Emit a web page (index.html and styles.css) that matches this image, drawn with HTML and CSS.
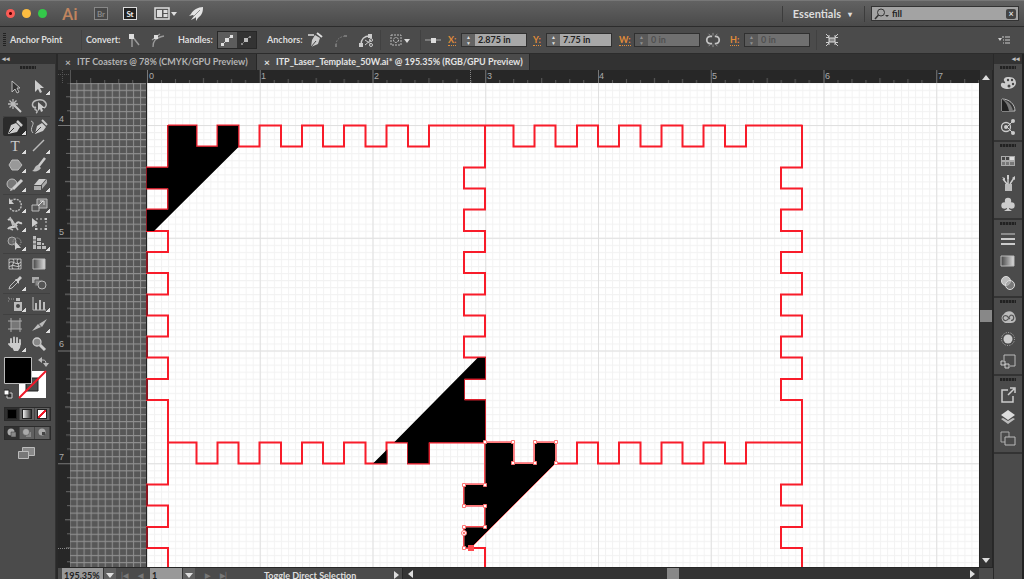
FILE: index.html
```html
<!DOCTYPE html>
<html lang="en">
<head>
<meta charset="utf-8">
<meta name="viewport" content="width=device-width, initial-scale=1">
<title>ITP_Laser_Template_50W.ai</title>
<link rel="stylesheet" href="styles.css">
</head>
<body>
<header class="titlebar">
  <div class="lights">
    <button class="light close" aria-label="Close"></button>
    <button class="light minimise" aria-label="Minimise"></button>
    <button class="light expand" aria-label="Zoom window"></button>
  </div>
  <span class="logo">Ai</span>
  <button class="badge dim">Br</button>
  <button class="badge">St</button>
  <button class="arrange" aria-label="Arrange documents"><svg width="24" height="14" viewBox="0 0 24 14"><rect x="1" y="1" width="14" height="11" fill="#555" stroke="#ddd" stroke-width="1.5"/><path d="M3 3h5v7H3zM9.500 3h4v3h-4zM9.500 7h4v3h-4z" fill="#ddd"/><path d="M17 5h6l-3 4z" fill="#ddd"/></svg></button>
  <button class="rocket" aria-label="GPU performance"><svg width="16" height="16" viewBox="0 0 16 16"><path d="M15 1C10 1 5 4 3 8L1 10l4-1 1 1-3 4 4-2 1-1 0 4 2-3c4-3 5-6 5-11z" fill="#e4e4e4"/><path d="M12 4L5 11" stroke="#777" stroke-width=".8" fill="none"/></svg></button>
  <div class="title-right">
    <button class="workspace-name">Essentials<span class="caret">▾</span></button>
    <label class="search">
      <svg width="16" height="12" viewBox="0 0 16 12"><circle cx="7" cy="4.500" r="3.500" fill="none" stroke="#333"/><path d="M4.500 7L1 11" stroke="#333" stroke-width="1.500"/><path d="M11 7h4l-2 2z" fill="#333"/></svg>
      <input type="text" value="fill" aria-label="Search help">
      <button class="clear" aria-label="Clear search">×</button>
    </label>
  </div>
</header>

<section class="controls" aria-label="Control panel">
  <div class="group selection"><span class="side-grip"></span><span>Anchor Point</span></div>
  <div class="group convert">
    <span>Convert:</span>
    <button aria-label="Convert to corner"><svg width="18" height="18" viewBox="0 0 18 18"><path d="M8 16V5l7 9" fill="none" stroke="#999" stroke-width="1.500"/><path d="M5 3h5v5H5z" fill="#ddd"/></svg></button>
    <button aria-label="Convert to smooth"><svg width="18" height="18" viewBox="0 0 18 18"><path d="M4 16c0-6 2-9 11-11M3 9l8-6" fill="none" stroke="#999" stroke-width="1.300"/><path d="M5 4h4v4H5z" fill="#ddd"/></svg></button>
    <span>Handles:</span>
    <span class="toggle"><button class="on" aria-label="Show handles"><svg width="18" height="16" viewBox="0 0 18 16"><path d="M5 12L13 4" stroke="#ccc"/><path d="M3 11h3v3H3zM12 3h3v3h-3zM7 6h4v4H7z" fill="#e0e0e0"/></svg></button><button aria-label="Hide handles"><svg width="18" height="16" viewBox="0 0 18 16"><path d="M5 12L13 4" stroke="#777"/><path d="M4 11h2v2H4zM12 4h2v2h-2z" fill="#888"/><path d="M7 6h4v4H7z" fill="#bbb"/></svg></button></span>
    <span>Anchors:</span>
    <button aria-label="Remove anchor"><svg width="18" height="18" viewBox="0 0 18 18"><path d="M2 4h6" stroke="#ddd" stroke-width="1.500"/><path d="M9 4l5 3-2 6-7 3 1-7z" fill="#ccc"/><path d="M5 16l5-6M11 2l5 4" stroke="#444"/><path d="M11 2l5 4" stroke="#ddd" stroke-width="2"/></svg></button>
    <button aria-label="Connect endpoints"><svg width="18" height="18" viewBox="0 0 18 18"><path d="M4 14c0-5 3-8 9-9" fill="none" stroke="#777" stroke-dasharray="2 1"/><path d="M3 13h2v3H3zM12 4h3v2h-3z" fill="#777"/></svg></button>
    <button aria-label="Cut path"><svg width="18" height="18" viewBox="0 0 18 18"><path d="M4 14c0-6 3-9 9-9" fill="none" stroke="#ccc" stroke-width="1.300"/><path d="M2 12h4v4H2zM11 3h4v4h-4z" fill="#ccc"/><path d="M8 9l6 4M8 14l6-5" stroke="#ccc"/><circle cx="14" cy="9" r="1.500" fill="none" stroke="#ccc"/><circle cx="14" cy="14" r="1.500" fill="none" stroke="#ccc"/></svg></button>
  </div>
  <div class="group isolate"><button aria-label="Select similar"><svg width="22" height="14" viewBox="0 0 22 14"><path d="M2 2h10v10H2z" fill="none" stroke="#bbb" stroke-dasharray="2 1"/><circle cx="7" cy="7" r="2.500" fill="none" stroke="#ccc" stroke-dasharray="2 1"/><path d="M15 6h6l-3 4z" fill="#ddd"/></svg></button></div>
  <div class="group transform">
    <svg width="18" height="14" viewBox="0 0 18 14"><path d="M1 7h16" stroke="#aaa"/><path d="M7 5h5v5H7z" fill="#ddd"/></svg>
    <label class="axis" for="fx">X:</label>
    <span class="field"><span class="spin">▲<br>▼</span><input id="fx" type="text" value="2.875 in"></span>
    <label class="axis" for="fy">Y:</label>
    <span class="field"><span class="spin">▲<br>▼</span><input id="fy" type="text" value="7.75 in"></span>
    <label class="axis" for="fw">W:</label>
    <span class="field off"><span class="spin">▲<br>▼</span><input id="fw" type="text" value="0 in" disabled></span>
    <button aria-label="Constrain proportions"><svg width="16" height="16" viewBox="0 0 18 18"><path d="M8 5H6a4 4 0 000 8h2M11 5h1a4 4 0 010 8h-1" fill="none" stroke="#c4c4c4" stroke-width="2"/><path d="M4 2l2 2M9 1v3M14 2l-2 2M4 16l2-2M9 14v3M14 16l-2-2" stroke="#999"/></svg></button>
    <label class="axis" for="fh">H:</label>
    <span class="field off"><span class="spin">▲<br>▼</span><input id="fh" type="text" value="0 in" disabled></span>
  </div>
  <div class="group shape"><button aria-label="Isolate selected object"><svg width="16" height="14" viewBox="0 0 16 14"><path d="M5 5h6v4H5z" fill="#888" stroke="#ddd"/><path d="M2 1l3 3M14 1l-3 3M2 13l3-3M14 13l-3-3M2 4.500h3V2M14 4.500h-3V2M2 9.500h3V12M14 9.500h-3V12" stroke="#ccc" fill="none"/></svg></button></div>
  <button class="panel-menu" aria-label="Panel menu"><svg width="14" height="10" viewBox="0 0 14 10"><path d="M0 3h4L2 6z" fill="#ccc"/><path d="M4 2h2M7 2h5M5 5h1M7 5h5M5 8h1M7 8h5" stroke="#ccc"/></svg></button>
</section>

<main class="workspace">
  <aside class="tools" aria-label="Tools">
    <div class="collapse">◂◂</div>
    <div class="grip"></div>
    <div class="tool-grid">
      <button aria-label="Selection"><svg viewBox="0 0 18 18"><path d="M6 3v11l3-3 2 4 2-1-2-4h3z" fill="#333" stroke="#bbb"/></svg></button>
      <button class="more" aria-label="Direct selection"><svg viewBox="0 0 18 18"><path d="M5 2v12l3-3 2 4 2-1-2-4h4z" fill="#ccc"/></svg></button>
      <button aria-label="Magic wand"><svg viewBox="0 0 18 18"><path d="M8 8l7 7" stroke="#ccc" stroke-width="2"/><path d="M7 2v10M2 7h10M3.500 3.500l7 7M10.500 3.500l-7 7" stroke="#bbb" stroke-width="1.300"/></svg></button>
      <button aria-label="Lasso"><svg viewBox="0 0 18 18"><path d="M6 11C1 10 1 4 8 3s11 5 6 8M6 10c-2 1-1 3 0 3s2 2 0 3" fill="none" stroke="#bbb" stroke-width="1.500"/><path d="M8 5v9l2-2 1 3 2-1-1-3h3z" fill="#ccc"/></svg></button>
      <hr>
      <button class="more active" aria-label="Pen"><svg viewBox="0 0 18 18"><path d="M2 16l3-9 5-2 4 4-3 5z" fill="#ccc"/><path d="M3 15l5-5" stroke="#333"/><path d="M11 3l5 5" stroke="#ccc" stroke-width="2.500"/></svg></button>
      <button aria-label="Curvature"><svg viewBox="0 0 18 18"><path d="M5 16l2-8 5-3 4 4-3 4z" fill="#ccc"/><path d="M5 15l6-6" stroke="#444"/><path d="M12 2l5 5" stroke="#ccc" stroke-width="2"/><path d="M1 3c6 2-3 7 2 12" fill="none" stroke="#bbb"/></svg></button>
      <button class="more type" aria-label="Type">T</button>
      <button class="more" aria-label="Line segment"><svg viewBox="0 0 18 18"><path d="M3 14L14 3" stroke="#bbb" stroke-width="1.500"/></svg></button>
      <button class="more" aria-label="Polygon"><svg viewBox="0 0 18 18"><path d="M6 4h6l4 5-4 5H6L3 9z" fill="#999" stroke="#bbb"/></svg></button>
      <button class="more" aria-label="Paintbrush"><svg viewBox="0 0 18 18"><path d="M15 2L8 11" stroke="#ccc" stroke-width="2.500"/><path d="M8 9l3 3c-2 3-5 4-9 3 3-1 2-5 6-6z" fill="#bbb"/></svg></button>
      <button class="more" aria-label="Shaper"><svg viewBox="0 0 18 18"><circle cx="6" cy="9" r="5" fill="#777" stroke="#bbb"/><path d="M16 5l-9 9" stroke="#ccc" stroke-width="3"/><path d="M4 16l1-3 2 2z" fill="#ccc"/></svg></button>
      <button class="more" aria-label="Eraser"><svg viewBox="0 0 18 18"><path d="M9 4h7l-5 6H4z" fill="#ccc"/><path d="M4 11h7v4H4zM12 10l5-6v4l-5 6z" fill="#aaa"/></svg></button>
      <hr>
      <button class="more" aria-label="Rotate"><svg viewBox="0 0 18 18"><path d="M5 5a6 6 0 11-1 7" fill="none" stroke="#bbb" stroke-width="1.500" stroke-dasharray="2 1"/><path d="M3 2v6h5z" fill="#ccc"/></svg></button>
      <button class="more" aria-label="Scale"><svg viewBox="0 0 18 18"><path d="M7 3h10v9H7z" fill="#777" stroke="#bbb"/><path d="M2 9h7v6H2z" fill="#555" stroke="#bbb"/><path d="M8 10l5-5m-3 0h4v4" stroke="#ddd" fill="none"/></svg></button>
      <button class="more" aria-label="Width"><svg viewBox="0 0 18 18"><path d="M2 5c5-4 5 8 8 4s3 0 6-1M2 14c3-5 6 1 9-4" fill="none" stroke="#ccc" stroke-width="2"/><path d="M4 2l3 9M7 7l5 8M3 13l4 2" stroke="#bbb" stroke-width="1.500"/></svg></button>
      <button aria-label="Free transform"><svg viewBox="0 0 18 18"><path d="M6 4h10v10H6z" fill="none" stroke="#ccc" stroke-dasharray="2 2"/><path d="M2 3v9l6-4z" fill="#ccc"/><path d="M15 3h2v2h-2zM15 13h2v2h-2zM5 13h2v2H5z" fill="#ccc"/></svg></button>
      <button class="more" aria-label="Shape builder"><svg viewBox="0 0 18 18"><circle cx="6" cy="7" r="4" fill="#666" stroke="#aaa"/><circle cx="11" cy="8" r="4" fill="none" stroke="#aaa" stroke-dasharray="1 1"/><path d="M9 7v9l2-2h4z" fill="#ccc"/></svg></button>
      <button class="more" aria-label="Perspective grid"><svg viewBox="0 0 18 18"><path d="M3 2h3v13H3zM7 4h4v3H7zM7 8h4v3H7zM7 12h4v3H7zM12 9h2v2h-2zM12 12h4v3h-4z" fill="#bbb"/><path d="M3 6h3M3 10h3" stroke="#4b4b4b"/></svg></button>
      <hr>
      <button aria-label="Mesh"><svg viewBox="0 0 18 18"><path d="M3 4h12v10H3z" fill="#444" stroke="#bbb"/><path d="M3 8c4-4 7 4 12-1M3 12c5-4 8 2 12-2M7 4c3 4-3 6 0 10M12 4c-3 4 3 6 0 10" fill="none" stroke="#ccc"/></svg></button>
      <button aria-label="Gradient"><svg viewBox="0 0 18 18"><defs><linearGradient id="gr"><stop stop-color="#444"/><stop offset="1" stop-color="#ddd"/></linearGradient></defs><path d="M3 4h12v10H3z" fill="url(#gr)" stroke="#bbb"/></svg></button>
      <button class="more" aria-label="Eyedropper"><svg viewBox="0 0 18 18"><path d="M3 15l1-3 6-6 2 2-6 6z" fill="none" stroke="#bbb"/><path d="M9 5l2 0 3-3 2 2-3 3v3z" fill="#ccc"/></svg></button>
      <button aria-label="Blend"><svg viewBox="0 0 18 18"><path d="M2 3h7v6H2z" fill="#aaa"/><path d="M5 6h7v6H5z" fill="#888" stroke="#555"/><circle cx="12" cy="11" r="4" fill="#555" stroke="#bbb"/></svg></button>
      <hr>
      <button class="more" aria-label="Symbol sprayer"><svg viewBox="0 0 18 18"><path d="M8 7h8v9H8zM10 3h4v3h-4z" fill="#bbb"/><circle cx="12" cy="11" r="2" fill="#444"/><path d="M3 4h5M2 3h1M2 6h1" stroke="#999" stroke-dasharray="1 1"/></svg></button>
      <button class="more" aria-label="Column graph"><svg viewBox="0 0 18 18"><path d="M3 2v13h13" fill="none" stroke="#bbb"/><path d="M5 8h2v7H5zM9 5h2v10H9zM13 7h2v8h-2z" fill="#bbb"/></svg></button>
      <hr>
      <button aria-label="Artboard"><svg viewBox="0 0 18 18"><path d="M5 5h9v8H5z" fill="#777"/><path d="M2 5h14M2 13h14M5 2v14M14 2v14" stroke="#aaa"/></svg></button>
      <button class="more" aria-label="Slice"><svg viewBox="0 0 18 18"><path d="M2 15l6-7 3 3zM9 8l8-5-5 8z" fill="#bbb"/></svg></button>
      <button class="more" aria-label="Hand"><svg viewBox="0 0 18 18"><path d="M5 9V4M8 8V2.500M11 8V3M14 9V5M3 9l3 3" stroke="#ccc" stroke-width="1.800" stroke-linecap="round"/><path d="M4 8h11l-1 5-2 3H8z" fill="#ccc"/></svg></button>
      <button aria-label="Zoom"><svg viewBox="0 0 18 18"><circle cx="7" cy="7" r="4" fill="#888" stroke="#ccc" stroke-width="1.300"/><path d="M10 10l5 5" stroke="#ccc" stroke-width="3"/></svg></button>
    </div>
    <svg class="swatches" width="46" height="48" viewBox="0 0 46 48"><path d="M15 15h27v27H15z" fill="#fff"/><path d="M22 22h12v13H22z" fill="#4b4b4b" stroke="#222"/><path d="M15 42L42 15" stroke="#f01828" stroke-width="2"/><path d="M.500 1.500h27v26H.500z" fill="#000" stroke="#bbb"/><path d="M36 4h3c2 0 3 1 3 4" fill="none" stroke="#bbb"/><path d="M34 4l4-3v6zM39 7h6l-3 4z" fill="#bbb"/><path d="M3 37h5v5H3z" fill="#333" stroke="#ccc"/><path d="M0 34h5v5H0z" fill="#fff" stroke="#222"/></svg>
    <div class="paint-row">
      <button class="pressed" aria-label="Colour"><i class="chip solid"></i></button>
      <button aria-label="Gradient fill"><i class="chip fade"></i></button>
      <button aria-label="None"><i class="chip none"></i></button>
    </div>
    <div class="paint-row">
      <button class="pressed" aria-label="Draw normal"><svg width="12" height="12" viewBox="0 0 12 12"><circle cx="5" cy="5" r="3.500" fill="#aaa"/><path d="M5 5h5v5H5z" fill="#888" stroke="#333" stroke-width=".500"/></svg></button>
      <button aria-label="Draw behind"><svg width="12" height="12" viewBox="0 0 12 12"><path d="M5 5h5v5H5z" fill="#888"/><circle cx="5" cy="5" r="3.500" fill="#aaa" stroke="#444" stroke-width=".500"/></svg></button>
      <button aria-label="Draw inside"><svg width="12" height="12" viewBox="0 0 12 12"><circle cx="6" cy="5" r="3.500" fill="#aaa"/><path d="M6 5h3v3H6z" fill="#444"/></svg></button>
    </div>
    <button class="screen-mode" aria-label="Change screen mode"><svg width="18" height="14" viewBox="0 0 18 14"><path d="M5.500 1.500h12v8h-12z" fill="#888" stroke="#bbb"/><path d="M1.500 5.500h10v7h-10z" fill="#777" stroke="#bbb"/></svg></button>
  </aside>

  <section class="document">
    <nav class="tabs">
      <button class="tab"><span>×</span>ITF Coasters @ 78% (CMYK/GPU Preview)</button>
      <button class="tab current"><span>×</span>ITP_Laser_Template_50W.ai* @ 195.35% (RGB/GPU Preview)</button>
    </nav>
    <svg class="ruler top"><defs>
      <pattern id="tx" x="147" y="70" width="112.750" height="14" patternUnits="userSpaceOnUse"><path d="M.500 0v14" stroke="#777"/><path d="M14.500 10v4M28.500 9v5M42.500 10v4M56.500 8v6M70.500 10v4M84.500 9v5M98.500 10v4" stroke="#5c5c5c"/></pattern></defs>
      <g transform="translate(-58 -70)"><rect x="71" y="70" width="3000" height="14" fill="url(#tx)"/><path d="M62.500 70v13M58 74.500h12" stroke="#555" stroke-dasharray="1 1"/><path d="M70.500 70v13" stroke="#555"/><path d="M470.500 70v13" stroke="#888" stroke-dasharray="1 1"/>
      <text x="149" y="79">0</text><text x="261" y="79">1</text><text x="374" y="79">2</text><text x="487" y="79">3</text><text x="599" y="79">4</text><text x="712" y="79">5</text><text x="825" y="79">6</text><text x="938" y="79">7</text></g></svg>
    <svg class="ruler left"><defs>
      <pattern id="ty" x="58" y="125" width="12" height="112.750" patternUnits="userSpaceOnUse"><path d="M0 .500h12" stroke="#777"/><path d="M9 14.500h3M8 28.500h4M9 42.500h3M7 56.500h5M9 70.500h3M8 84.500h4M9 98.500h3" stroke="#666"/></pattern></defs>
      <g transform="translate(-58 -83)"><rect x="58" y="83" width="12" height="3000" fill="url(#ty)"/><path d="M58 548.500h12" stroke="#888" stroke-dasharray="1 1"/>
      <text x="59" y="122">4</text><text x="59" y="235">5</text><text x="59" y="347">6</text><text x="59" y="460">7</text></g></svg>
    <svg class="canvas" role="img" aria-label="Laser template artwork">
      <defs>
        <pattern id="fine" x="147" y="125" width="7.047" height="7.047" patternUnits="userSpaceOnUse"><path d="M.500 0v8M0 .500h8" stroke="#f2f2f2" fill="none"/></pattern>
        <pattern id="inch" x="147" y="125" width="112.750" height="112.750" patternUnits="userSpaceOnUse"><path d="M.500 0v113M0 .500h113" stroke="#e0e0e0" fill="none"/></pattern>
        <pattern id="board" x="147" y="125" width="7.047" height="7.047" patternUnits="userSpaceOnUse"><path d="M.500 0v8M0 .500h8" stroke="#919191" fill="none"/></pattern>
        <path id="row" d="M168 125.500H196.500V146.500H217.500V125.500H238.500V146.500H259.500V125.500H281V146.500H302V125.500H323V146.500H344V125.500H365.500V146.500H386.500V125.500H408V146.500H429V125.500H513.500V146.500H534.500V125.500H555.500V146.500H577V125.500H598V146.500H619V125.500H640.500V146.500H661.500V125.500H682.500V146.500H703.500V125.500H725V146.500H746V125.500H802.500"/>
        <path id="col" d="M168 125V167.500H147V188.500H168V209.500H147V231H168V252H147V273H168V294.500H147V315.500H168V336.500H147V357.500H168V379H147V400H168V484.500H147V505.500H168V527H147V548H168V590"/>
      </defs>
      <g transform="translate(-70 -83)">
        <rect x="70" y="83" width="77" height="3000" fill="#575757"/>
        <rect x="70" y="83" width="77" height="3000" fill="url(#board)"/>
        <rect x="147" y="83" width="3000" height="3000" fill="#fff"/>
        <rect x="147" y="83" width="3000" height="3000" fill="url(#fine)"/>
        <rect x="147" y="83" width="3000" height="3000" fill="url(#inch)"/>
        <path d="M146.500 83v3000" stroke="#222"/>
        <g fill="none" stroke="#f81c2a" stroke-width="2">
          <use href="#row"/><use href="#row" y="317"/>
          <use href="#col"/><use href="#col" x="317"/><use href="#col" x="634"/>
        </g>
        <path d="M147 167.500v21M147 209.500V231M147 252v21M147 294.500v21M147 336.500v21M147 379v21M147 484.500v21M147 527v21" stroke="#8c1520" stroke-width="2"/>
        <g fill="#000">
          <path d="M168 125.500H196.500V146.500H217.500V125.500H238.500V147L154 231H147V209.500H168V188.500H147V167.500H168Z"/>
          <path d="M478 357.500H485.500V379H464.500V400H485.500V442.500H429V463.500H407.500V442.500H394ZM373 463.500H387V449.500Z"/>
          <path d="M485 442.500H513.500V463.500H534.500V442.500H555.500V463.500L471 548H464V527H485V505.500H464V484.500H485Z" stroke="#f77"/>
        </g>
        <path d="M147 167.500H168V125.500H196.500V146.500H217.500V125.500H238.500V147M147 188.500H168V209.500H147M478 357.500H485.500V379H464.500V400H485.500V442.500H429V463.500H407.500V442.500H394M373 463.500H387V449.500" fill="none" stroke="#c3202c"/>
        <g fill="#fff" stroke="#f77">
          <path d="M483.500 440.500h3v3h-3zM511.500 440.500h3v3h-3zM533.500 440.500h3v3h-3zM554.500 440.500h3v3h-3zM511.500 461.500h3v3h-3zM533.500 461.500h3v3h-3zM554.500 461.500h3v3h-3zM483.500 483.500h3v3h-3zM462.500 483.500h3v3h-3zM462.500 504.500h3v3h-3zM483.500 504.500h3v3h-3zM483.500 525.500h3v3h-3zM462.500 525.500h3v3h-3zM462.500 546.500h3v3h-3z"/>
          <circle cx="464" cy="533" r="2.500"/>
        </g>
        <circle cx="464" cy="533" r="1" fill="#f44"/>
        <path d="M468 545h6v6h-6z" fill="#ff4b50"/>
      </g>
    </svg>
    <div class="vscroll"><span class="tri up"></span><span class="thumb"></span><span class="tri down"></span></div>
    <footer class="status">
      <div class="status-info">
        <input class="zoom" type="text" value="195.35%" aria-label="Zoom level"><button class="drop" aria-label="Zoom presets"><span class="tri down"></span></button>
        <button class="step" aria-label="First artboard">|◀</button><button class="step" aria-label="Previous artboard">◀</button>
        <input class="page" type="text" value="1" aria-label="Artboard"><button class="drop" aria-label="Artboard list"><span class="tri down"></span></button>
        <button class="step" aria-label="Next artboard">▶</button><button class="step" aria-label="Last artboard">▶|</button>
        <span class="hint">Toggle Direct Selection</span><span class="tri right"></span>
      </div>
      <div class="hscroll"><span class="tri left"></span><span class="thumb"></span><span class="tri right"></span></div>
      <div class="corner"></div>
    </footer>
  </section>

  <aside class="dock" aria-label="Panels">
    <div class="collapse">◂◂</div>
    <div class="dock-group"><div class="grip"></div>
      <button aria-label="Color"><svg viewBox="0 0 18 18"><path d="M10 3c5 0 7 3 7 6s-4 6-8 6-8-2-7-5 3 0 4-1-2-2-1-4 3-2 5-2z" fill="#ccc"/><g fill="#444"><circle cx="9" cy="6" r="1.200"/><circle cx="13" cy="6" r="1.200"/><circle cx="14" cy="10" r="1.200"/><circle cx="10" cy="12" r="1.500"/></g></svg></button>
      <button aria-label="Color guide"><svg viewBox="0 0 18 18"><path d="M3 3c7 0 13 5 13 12H3z" fill="#333" stroke="#bbb"/><path d="M3 3c6 2 10 6 11 12H3z" fill="#777"/><path d="M3 3c4 3 6 7 7 12H3z" fill="#222"/></svg></button>
      <button aria-label="Color themes"><svg viewBox="0 0 18 18"><circle cx="7" cy="9" r="4.500" fill="none" stroke="#ccc" stroke-width="1.300"/><circle cx="7" cy="9" r="2" fill="#ccc"/><path d="M8 9l6-6M8 9l6 6" stroke="#ccc"/><circle cx="14" cy="3" r="2" fill="#ccc"/><circle cx="14" cy="15" r="2" fill="#ccc"/></svg></button>
    </div>
    <div class="dock-group"><div class="grip"></div>
      <button aria-label="Swatches"><svg viewBox="0 0 18 18"><path d="M2 4h14v10H2z" fill="#aaa"/><path d="M3 5h3v3H3zM7 5h3v3H7z" fill="#444"/><path d="M11 5h4v3h-4z" fill="#ddd"/><path d="M3 10h3v3H3zM7 10h3v3H7zM11 10h4v3h-4z" fill="#777"/></svg></button>
      <button aria-label="Brushes"><svg viewBox="0 0 18 18"><path d="M6 10h7v7H6z" fill="#bbb"/><path d="M8 10L4 5M9 10V2M11 10l4-6" stroke="#ccc" stroke-width="1.500"/><path d="M3 3l3 1v3zM8 1h2v4H8zM13 4l3-2v4z" fill="#ccc"/></svg></button>
      <button aria-label="Symbols"><svg viewBox="0 0 18 18"><g fill="#ccc"><circle cx="9" cy="5" r="3.200"/><circle cx="5.500" cy="9.500" r="3.200"/><circle cx="12.500" cy="9.500" r="3.200"/><path d="M8 7h2v6l3 2H5l3-2z"/></g></svg></button>
    </div>
    <div class="dock-group"><div class="grip"></div>
      <button aria-label="Stroke"><svg viewBox="0 0 18 18"><path d="M2 4h14" stroke="#ccc"/><path d="M2 9h14" stroke="#ccc" stroke-width="2"/><path d="M2 14h14" stroke="#ccc" stroke-width="2"/></svg></button>
      <button aria-label="Gradient panel"><svg viewBox="0 0 18 18"><path d="M2 4h13v10H2z" fill="url(#gr)" stroke="#bbb"/></svg></button>
      <button aria-label="Transparency"><svg viewBox="0 0 18 18"><circle cx="7" cy="7" r="4.500" fill="#bbb" stroke="#ddd"/><circle cx="11" cy="11" r="4.500" fill="#999" fill-opacity=".6" stroke="#ddd"/></svg></button>
    </div>
    <div class="dock-group"><div class="grip"></div>
      <button aria-label="Libraries"><svg viewBox="0 0 18 18"><path d="M6 15a5 5 0 01-1-9c2-4 10-4 11 2 2 4 0 7-4 7z" fill="#bbb"/><path d="M11 11L8 8a2.500 2.500 0 10-1 4.500c3 0 3-5 5-5.500a2.700 2.700 0 110 5.500" fill="none" stroke="#555" stroke-width="1.200"/></svg></button>
      <button aria-label="Appearance"><svg viewBox="0 0 18 18"><circle cx="9" cy="9" r="4.500" fill="#ccc"/><circle cx="9" cy="9" r="6.500" fill="none" stroke="#bbb" stroke-dasharray="1 1.500"/></svg></button>
      <button aria-label="Graphic styles"><svg viewBox="0 0 18 18"><path d="M5 8V3h11v11h-5" fill="none" stroke="#bbb"/><path d="M2 9h4v4H2zM6 12h4v4H6z" fill="#555" stroke="#ccc"/></svg></button>
    </div>
    <div class="dock-group"><div class="grip"></div>
      <button aria-label="Asset export"><svg viewBox="0 0 18 18"><path d="M9 4H3v12h11v-6" fill="none" stroke="#ccc" stroke-width="1.500"/><path d="M9 9l6-6M11 2h5v5" fill="none" stroke="#ccc" stroke-width="1.500"/></svg></button>
      <button aria-label="Layers"><svg viewBox="0 0 18 18"><path d="M9 2l7 5-7 5-7-5z" fill="#ddd"/><path d="M2 11l2-1 5 3 5-3 2 1-7 5z" fill="#bbb"/></svg></button>
      <button aria-label="Artboards"><svg viewBox="0 0 18 18"><path d="M2 2h8v10H2z" fill="none" stroke="#aaa"/><path d="M6 7h10v8H6z" fill="#4b4b4b" stroke="#bbb"/></svg></button>
    </div>
  </aside>
</main>
</body>
</html>
```
FILE: styles.css
```css
* { box-sizing: border-box; }
body {
  margin: 0;
  height: 100vh;
  display: flex;
  flex-direction: column;
  overflow: hidden;
  background: #4b4b4b;
  color: #ddd;
  font: 700 9px/12px Lato, "Open Sans", sans-serif;
}
button, input { font: inherit; color: inherit; border: 0; padding: 0; margin: 0; background: none; min-width: 0; border-radius: 0; }
svg { display: block; flex: none; }

.titlebar {
  flex: none;
  height: 27px;
  display: flex;
  align-items: center;
  padding: 0 5px 0 6px;
  border-top: 1px solid #777;
  border-bottom: 1px solid #2c2c2c;
  background: linear-gradient(#626262, #4a4a4a);
}
.lights { display: flex; gap: 7px; }
.light { width: 9px; height: 9px; border-radius: 50%; }
.close { background: radial-gradient(#500 1px, #fb5b55 2px); }
.minimise { background: #fdbc40; }
.expand { background: #34c84a; }
.logo { margin-left: 15px; width: 32px; color: #c0855f; font: 500 17px/20px Roboto, sans-serif; }
.badge { width: 14px; height: 13px; margin-right: 15px; border: 1px solid #ddd; background: #222; color: #eee; font-size: 8px; line-height: 10px; }
.badge.dim { border-color: #888; background: #484848; color: #888; }
.arrange { margin-left: 2px; }
.rocket { margin-left: 10px; }
.title-right { margin-left: auto; display: flex; align-items: center; }
.workspace-name { display: flex; align-items: center; gap: 7px; height: 16px; padding: 0 12px 0 10px; margin-right: 6px; border: solid #3c3c3c; border-width: 0 1px; font-size: 11px; }
.caret { font-size: 8px; }
.search { display: flex; align-items: center; width: 148px; height: 15px; padding: 0 2px; border: 1px solid #333; background: #a3a3a3; color: #222; }
.search input { flex: 1; padding-left: 2px; }
.clear { width: 10px; height: 10px; border-radius: 2px; background: #444; color: #ddd; line-height: 9px; }

.controls { flex: none; display: flex; align-items: center; height: 27px; background: #4b4b4b; border-bottom: 1px solid #2c2c2c; }
.group { display: flex; align-items: center; height: 20px; border-right: 1px solid #414141; flex: none; white-space: nowrap; }
.selection { width: 82px; padding-left: 3px; gap: 4px; }
.side-grip { width: 3px; height: 14px; background: repeating-linear-gradient(#222 0 1px, #4b4b4b 1px 2px); }
.convert { display: grid; grid-template-columns: 38px 25px 29px 39px 50px 39px 26px 25px 18px; width: 299px; padding-left: 4px; }
.toggle { display: flex; width: 40px; height: 18px; border: 1px solid #272727; background: #333; }
.toggle button { width: 19px; }
.toggle .on { background: #5c5c5c; }
.isolate { width: 40px; padding-left: 8px; }
.transform { display: grid; grid-template-columns: 24px 13px 72px 13px 73px 15px 71px 25px 14px 66px; width: 396px; padding-left: 3px; }
.axis { color: #e08c3a; justify-self: start; line-height: 11px; border-bottom: 1px dotted #e08c3a; }
.field { display: flex; width: 66px; height: 14px; border: 1px solid #303030; }
.spin { width: 13px; background: #646464; color: #ddd; font-size: 5px; line-height: 6px; text-align: center; }
.field input { flex: 1; padding-left: 3px; background: #a8a8a8; color: #222; }
.field.off input { background: #707070; color: #505050; }
.field.off .spin { background: #595959; color: #909090; }
.shape { border: 0; padding-left: 7px; }
.panel-menu { margin-left: auto; margin-right: 12px; }

.workspace { flex: 1; min-height: 0; display: flex; background: #292929; }
.tools { flex: none; width: 56px; background: #4b4b4b; border-right: 1px solid #333; }
.collapse { height: 10px; background: #333; color: #bbb; font-size: 7px; line-height: 9px; padding-left: 2px; }
.grip { width: 16px; height: 3px; margin: 2px auto; background: repeating-linear-gradient(90deg, #222 0 2px, #3a3a3a 2px 3px); }
.tool-grid { display: grid; grid-template-columns: 24px 24px; padding: 6px 0 0 3px; }
.tool-grid button { position: relative; height: 19px; padding: 0 3px; border-radius: 2px; }
.tool-grid svg, .dock svg { width: 18px; height: 18px; }
.tool-grid hr { grid-column: 1 / 3; width: 47px; height: 2px; margin: 0; border: 0; border-bottom: 1px solid #404040; }
.more::after { content: ""; position: absolute; right: 1px; bottom: 1px; width: 4px; height: 4px; background: linear-gradient(135deg, transparent 50%, #ddd 50%); }
.tool-grid .active { background: #2b2b2b; }
.tool-grid .type { font: 15px/18px "Liberation Serif", serif; color: #ccc; text-align: center; }
.swatches { margin: 3px 0 0 4px; }
.paint-row { display: grid; grid-template-columns: 1fr 1fr 1fr; width: 47px; height: 14px; margin: 3px 0 5px 4px; border: 1px solid #2b2b2b; background: #606060; }
.paint-row button { display: grid; place-items: center; border-right: 1px solid #444; }
.paint-row .pressed { background: #303030; }
.chip { width: 10px; height: 10px; border: 1px solid #222; }
.solid { background: #000; }
.fade { background: linear-gradient(90deg, #eee, #333); }
.none { background: linear-gradient(135deg, #fff 42%, #f01828 42% 58%, #fff 58%); }
.screen-mode { display: block; margin: 6px auto 0 17px; }

.document { flex: 1; min-width: 0; margin-left: 2px; display: grid; grid-template-columns: 12px 1fr 14px; grid-template-rows: 16px 13px 1fr 12px; }
.tabs { grid-column: 1 / 4; display: flex; background: #323232; min-width: 0; }
.tab { display: flex; align-items: center; gap: 6px; width: 199px; padding-left: 7px; background: #383838; color: #b4b4b4; border-right: 1px solid #272727; white-space: nowrap; }
.tab.current { width: 273px; background: #4b4b4b; color: #e4e4e4; }
.tab span { width: 6px; font-size: 10px; }
.ruler { width: 100%; height: 100%; overflow: hidden; background: #272727; }
.ruler text { font: 9px "Liberation Sans", sans-serif; fill: #aaa; }
.ruler.top { grid-column: 1 / 3; grid-row: 2; }
.ruler.left { grid-column: 1; grid-row: 3; }
.canvas { grid-column: 2; grid-row: 3; width: 100%; height: 100%; overflow: hidden; }
.vscroll { grid-column: 3; grid-row: 2 / 4; display: grid; grid-template-rows: 14px 47fr 12px 48fr 14px; justify-items: center; align-items: center; background: #343434; border: solid #272727; border-width: 0 1px; }
.vscroll .thumb { grid-row: 3; width: 12px; height: 12px; background: #888; }
.vscroll .down { grid-row: 5; }
.tri { border: 4px solid transparent; width: 0; height: 0; flex: none; }
.tri.up { border-top: 0; border-bottom: 5px solid #ddd; }
.tri.down { border-bottom: 0; border-top: 5px solid #ddd; }
.tri.left { border-left: 0; border-right: 5px solid #ddd; }
.tri.right { border-right: 0; border-left: 5px solid #ddd; }

.status { grid-column: 1 / 4; grid-row: 4; display: flex; overflow: hidden; background: #4b4b4b; border-top: 1px solid #272727; }
.status-info { width: 345px; height: 14px; display: flex; align-items: center; padding-left: 4px; border-right: 1px solid #272727; flex: none; }
.status-info input { height: 14px; padding-left: 2px; background: #999; color: #222; }
.zoom { width: 41px; }
.page { width: 32px; margin-left: 2px; }
.drop { display: grid; place-items: center; width: 13px; height: 14px; background: #606060; border-left: 1px solid #333; }
.step { width: 15px; color: #777; font-size: 7px; margin-left: 1px; }
.page + .drop { margin-right: 4px; }
.hint { margin-left: 33px; width: 130px; line-height: 11px; white-space: nowrap; }
.hscroll { flex: 1; display: grid; grid-template-columns: 14px 254fr 12px 290fr 14px; align-items: center; justify-items: center; background: #343434; }
.hscroll .thumb { grid-column: 3; width: 12px; height: 11px; background: #888; }
.hscroll .right { grid-column: 5; }
.corner { width: 14px; }

.dock { flex: none; width: 30px; margin-left: 1px; background: #4b4b4b; border-right: 2px solid #222; }
.dock .collapse { text-align: right; padding-right: 2px; }
.dock-group { display: flex; flex-direction: column; align-items: center; height: 78px; border-bottom: 2px solid #333; }
.dock-group .grip { margin: 2px 0 3px; }
.dock-group button { height: 22px; padding: 2px 0; }
```
